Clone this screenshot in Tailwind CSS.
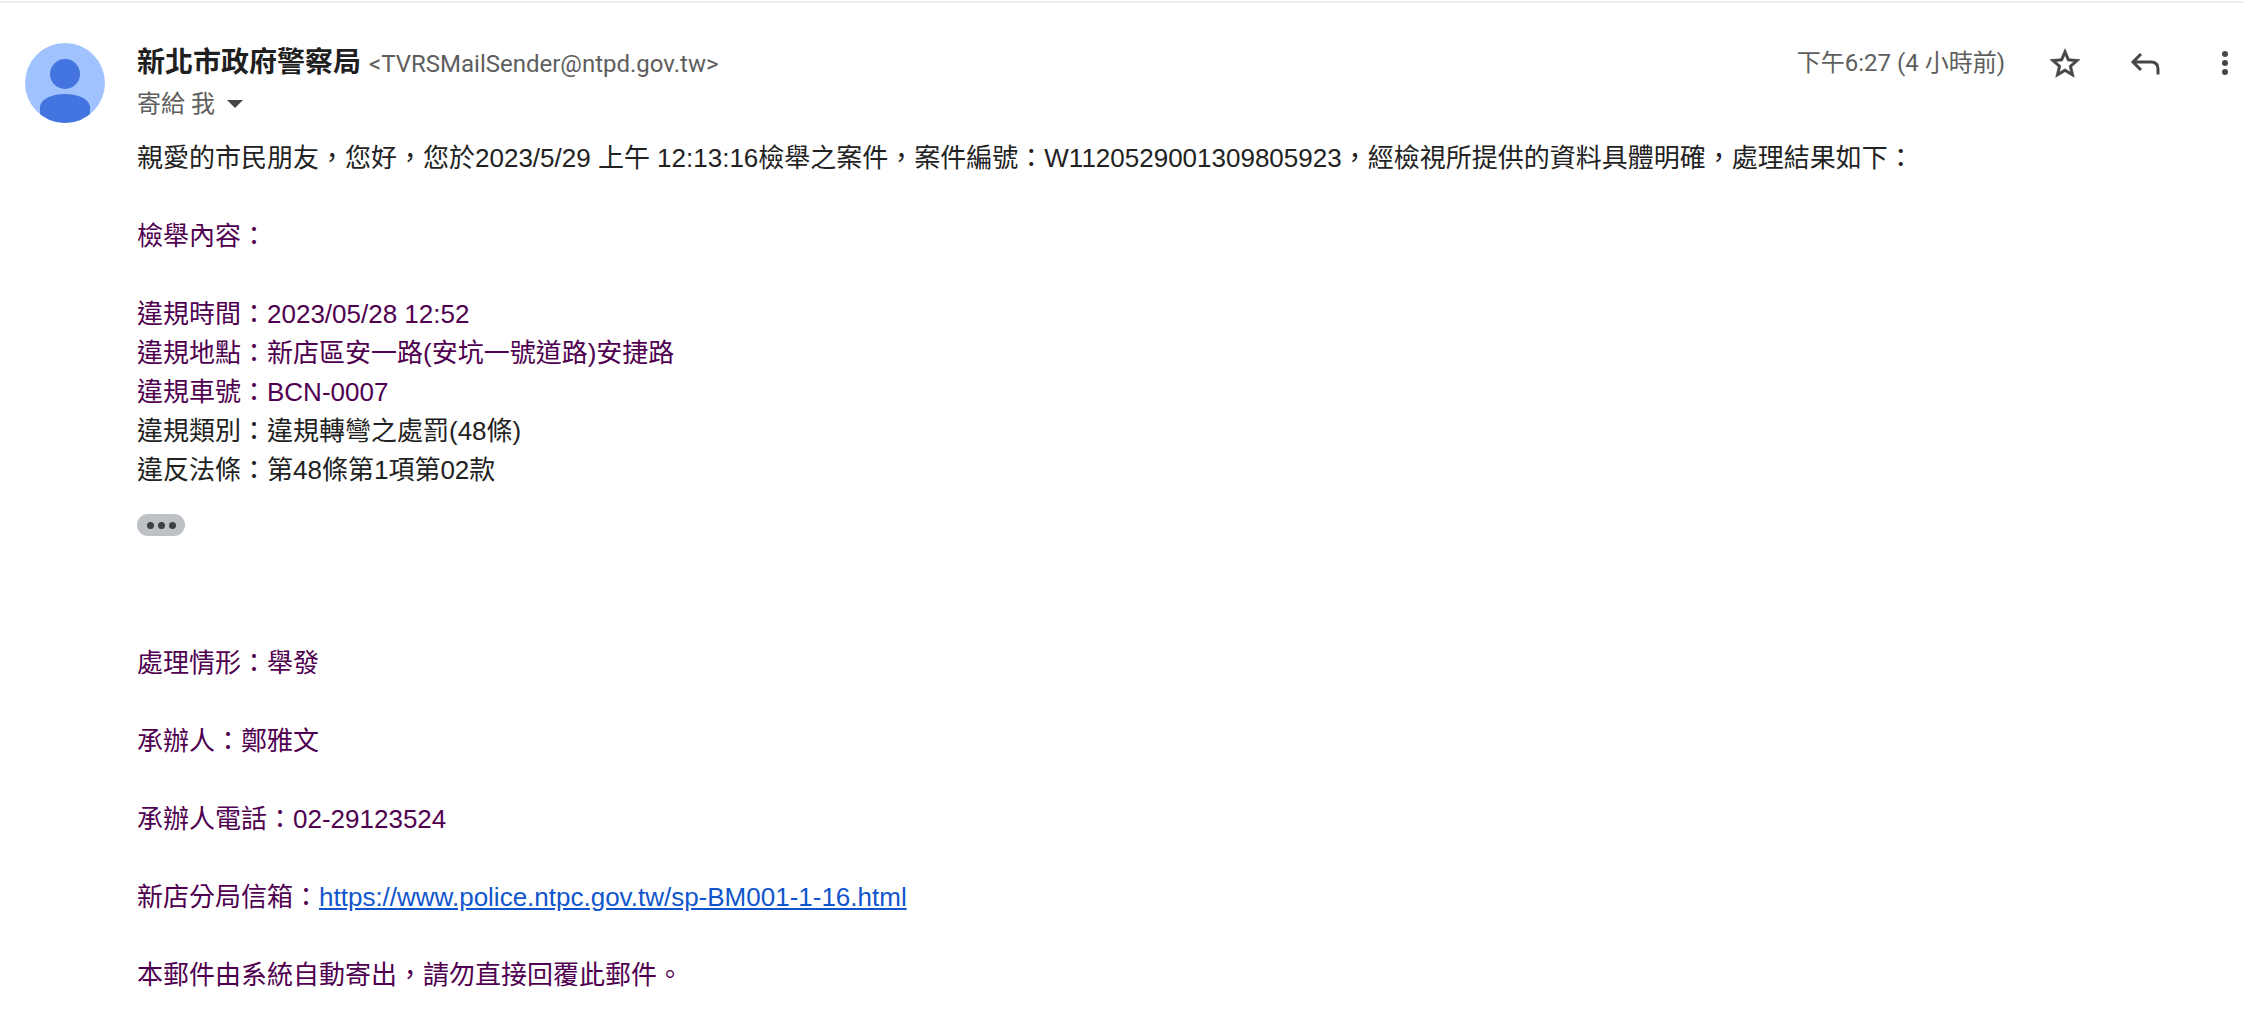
<!DOCTYPE html>
<html lang="zh-Hant">
<head>
  <meta charset="UTF-8" />
  <meta name="viewport" content="width=device-width, initial-scale=1" />
  <title>新北市政府警察局</title>
  <script src="https://cdn.jsdelivr.net/npm/@tailwindcss/browser@4"></script>
</head>
<body class="bg-white text-[#222222] font-['Liberation_Sans','Noto_Sans_CJK_TC',sans-serif]">

  <article class="mr-3 flex gap-8 border-t-2 border-[#eeeeee] mt-px pl-[25px] pt-10">

    <!-- Avatar -->
    <svg class="size-20 shrink-0 rounded-full" viewBox="0 0 80 80" role="img" aria-label="新北市政府警察局">
      <rect width="80" height="80" fill="#a0c3ff" />
      <circle cx="40" cy="31" r="15" fill="#4374e0" />
      <path d="M15 80V63C17 55 28 51 40 51s23 4 25 12v17z" fill="#4374e0" />
    </svg>

    <div class="min-w-0 grow">
      <header class="flex items-start justify-between font-[Roboto,'Noto_Sans_CJK_TC',sans-serif] text-2xl text-[#5e5e5e]">
        <div>
          <h1 class="flex items-baseline gap-2 leading-10">
            <span class="text-[28px] font-bold text-[#1f1f1f]">新北市政府警察局</span>
            <span>&lt;TVRSMailSender@ntpd.gov.tw&gt;</span>
          </h1>
          <button type="button" class="flex h-10 items-center gap-3" aria-label="顯示詳細資料">
            <span>寄給 我</span>
            <svg class="h-2 w-4" viewBox="0 0 16 8" fill="#444746"><path d="M0 0h16L8 8z" /></svg>
          </button>
        </div>

        <div class="flex h-10 items-center text-[#444746]">
          <time class="mr-[42px] text-[#5e5e5e]">下午6:27 (4 小時前)</time>
          <button type="button" class="mr-11" aria-label="加上星號">
            <svg class="size-9" viewBox="0 0 24 24" fill="currentColor" stroke="currentColor" stroke-width="0.4">
              <path d="M22 9.74l-7.19-.62L12 2.500 9.190 9.130 2 9.740l5.460 4.730L5.820 21.500 12 17.770l6.180 3.730-1.630-7.030L22 9.740zM12 15.900l-3.760 2.270 1-4.280-3.320-2.880 4.380-.38L12 6.600l1.710 4.040 4.380.38-3.320 2.880 1 4.280L12 15.900z" />
            </svg>
          </button>
          <button type="button" class="mr-[52px]" aria-label="回覆">
            <svg class="size-9" viewBox="0 0 36 36" fill="none" stroke="currentColor" stroke-width="3">
              <path d="M14 9l-8 8 8 8M6 17h18q7 0 7 7v5.500" />
            </svg>
          </button>
          <button type="button" class="mr-[9px]" aria-label="更多">
            <svg class="h-9 w-5" viewBox="0 0 20 36" fill="currentColor">
              <circle cx="10" cy="9" r="3" /><circle cx="10" cy="18" r="3" /><circle cx="10" cy="27" r="3" />
            </svg>
          </button>
        </div>
      </header>

      <!-- Message body -->
      <div class="mt-[15px] text-[26px] leading-[39px] text-[#500050]">
        <p class="text-[#222222]">親愛的市民朋友，您好，您於2023/5/29 上午 12:13:16檢舉之案件，案件編號：W1120529001309805923，經檢視所提供的資料具體明確，處理結果如下：</p>
        <p class="mt-[39px]">檢舉內容：</p>
        <div class="mt-[39px]">
          <p>違規時間：2023/05/28 12:52</p>
          <p>違規地點：新店區安一路(安坑一號道路)安捷路</p>
          <p>違規車號：BCN-0007</p>
          <p class="text-[#222222]">違規類別：違規轉彎之處罰(48條)</p>
          <p class="text-[#222222]">違反法條：第48條第1項第02款</p>
        </div>

        <button type="button" class="mt-6 flex h-[22px] w-12 items-center justify-center gap-1 rounded-full bg-[#bdc1c6]" aria-label="顯示修剪的內容">
          <span class="size-[7px] rounded-full bg-[#3c4043]"></span>
          <span class="size-[7px] rounded-full bg-[#3c4043]"></span>
          <span class="size-[7px] rounded-full bg-[#3c4043]"></span>
        </button>

        <div class="mt-27 flex flex-col gap-[39px]">
          <p>處理情形：舉發</p>
          <p>承辦人：鄭雅文</p>
          <p>承辦人電話：02-29123524</p>
          <p>新店分局信箱：<a href="https://www.police.ntpc.gov.tw/sp-BM001-1-16.html" class="text-[#1155cc] underline">https://www.police.ntpc.gov.tw/sp-BM001-1-16.html</a></p>
          <p>本郵件由系統自動寄出，請勿直接回覆此郵件。</p>
        </div>
      </div>
    </div>
  </article>

</body>
</html>
